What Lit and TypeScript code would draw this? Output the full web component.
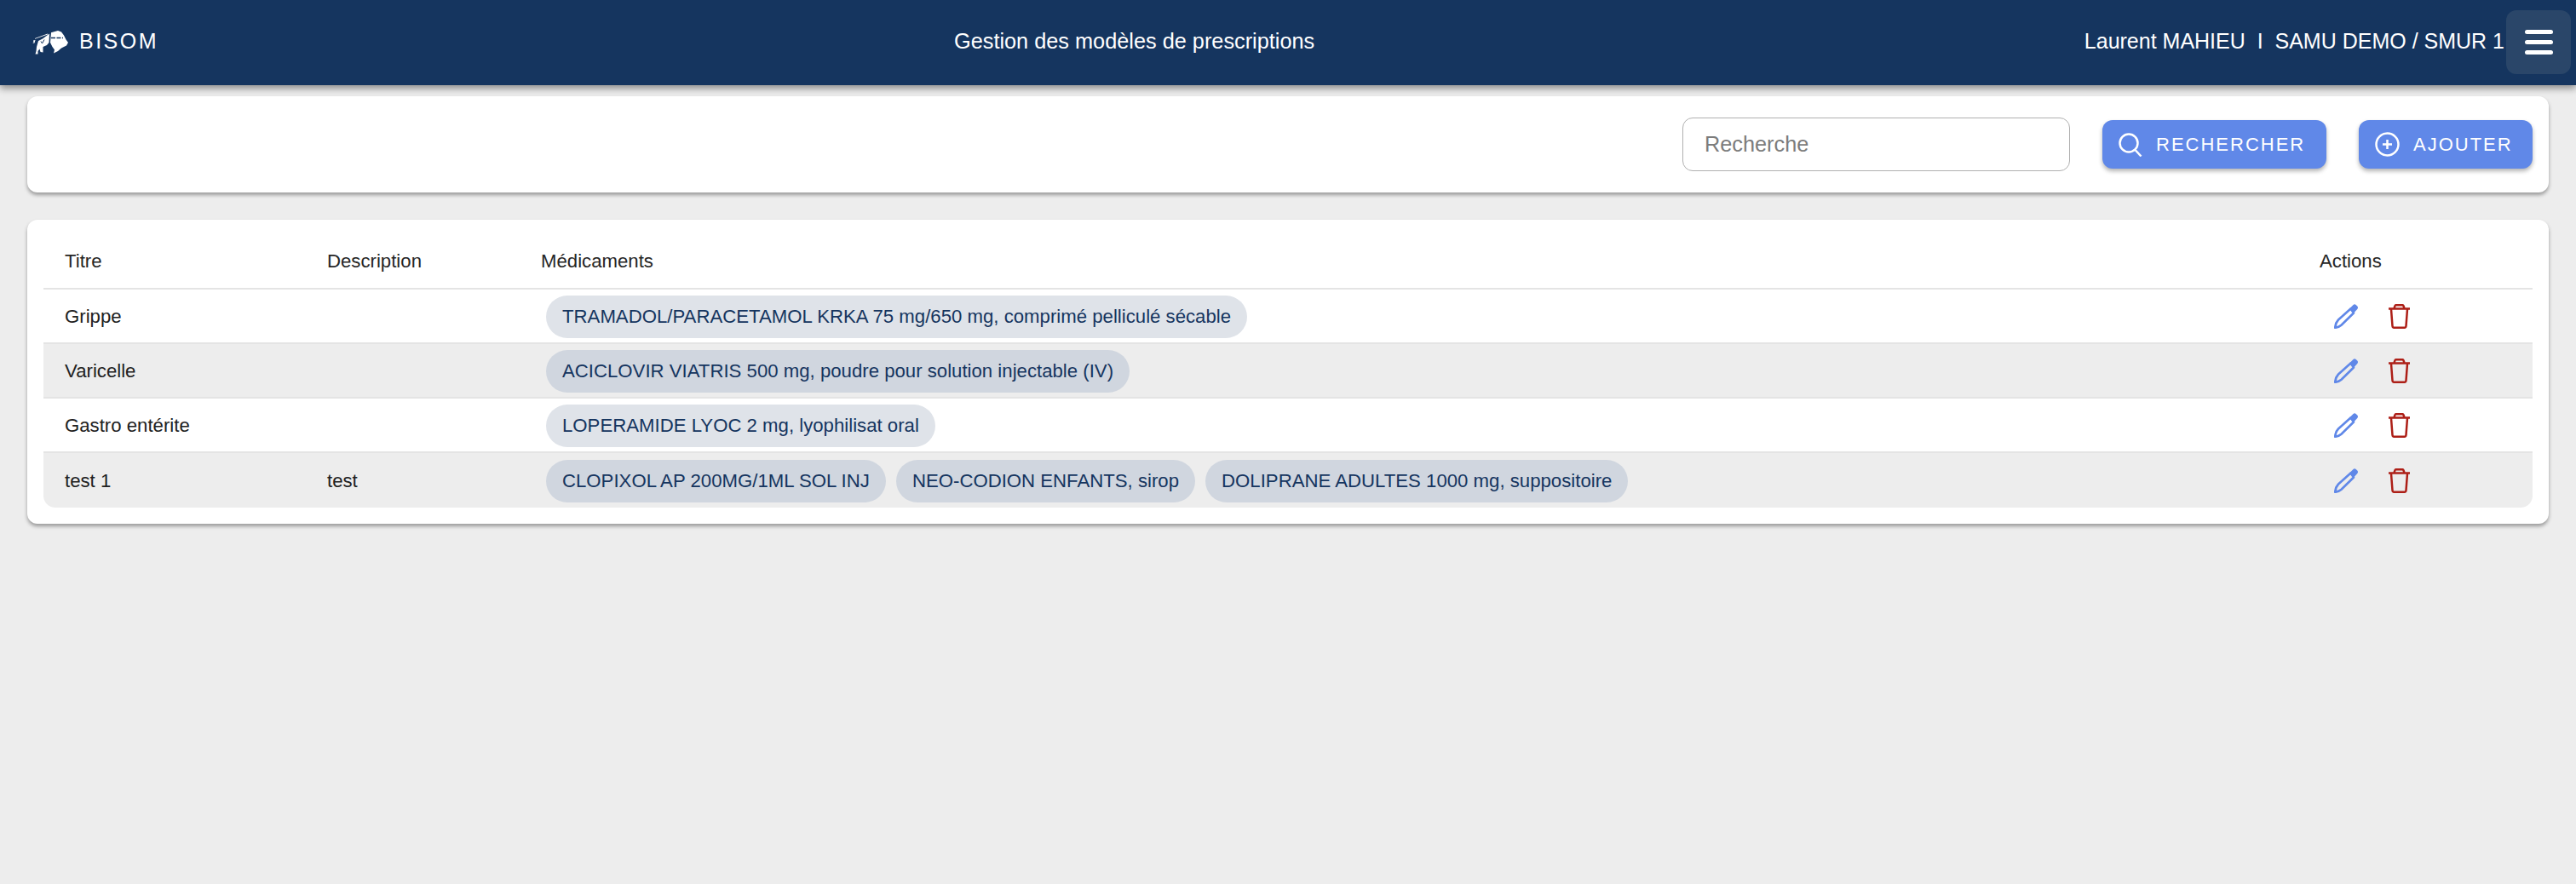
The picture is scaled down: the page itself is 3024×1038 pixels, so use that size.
import { LitElement, html, css } from "lit";
import { customElement } from "lit/decorators.js";

const rows = [
  { t: "Grippe", d: "", m: ["TRAMADOL/PARACETAMOL KRKA 75 mg/650 mg, comprimé pelliculé sécable"] },
  { t: "Varicelle", d: "", m: ["ACICLOVIR VIATRIS 500 mg, poudre pour solution injectable (IV)"] },
  { t: "Gastro entérite", d: "", m: ["LOPERAMIDE LYOC 2 mg, lyophilisat oral"] },
  { t: "test 1", d: "test", m: ["CLOPIXOL AP 200MG/1ML SOL INJ", "NEO-CODION ENFANTS, sirop", "DOLIPRANE ADULTES 1000 mg, suppositoire"] },
];

const pencil = html`<svg class="ico" width="28" height="29" viewBox="0 0 28 29" fill="none"><path d="M1.200 27.800C1.500 24 2.800 20.800 5 18.500L19.500 5.500L23 10.500L8.500 24.800C6.500 26.600 4 27.500 1.200 27.800Z" stroke="#6088e8" stroke-width="2.600" stroke-linejoin="round"/><path d="M18 5.500L22.500 1c1-.9 2.200-.9 3.200 0l1.600 1.600c.9 1 .9 2.300 0 3.300L22.700 11z" fill="#6088e8"/></svg>`;
const trash = html`<svg class="ico" width="25" height="29" viewBox="0 0 25 29" fill="none" stroke="#ad1f17" stroke-width="2.500"><path d="M0 5.500h25"/><path d="M6.500 5l1-2.800C7.800 1.400 8.400 1.200 9 1.200h7c.6 0 1.200.2 1.500 1l1 2.800"/><path d="M3 6l1.500 19.800c.1 1.300 1 2 2 2h12c1 0 1.900-.7 2-2L22 6"/></svg>`;

@customElement("app-root")
export class AppRoot extends LitElement {
  static styles = css`
    :host { display: block; min-height: 1038px; background: #ededed; font-family: "Liberation Sans", Arial, sans-serif; color: #212121; }
    .bar { height: 100px; box-sizing: border-box; padding-bottom: 3px; background: #15355f; color: #fff; display: grid; grid-template-columns: 1120px auto 1fr; align-items: center; box-shadow: 0 4px 8px rgba(0,0,0,.4); position: relative; }
    .brand { display: flex; align-items: center; padding-left: 38px; gap: 12px; font-size: 25px; letter-spacing: 2.500px; }
    .logo { display: block; margin-top: 2px; }
    .title { font-size: 25.300px; }
    .right { display: flex; align-items: center; justify-content: flex-end; font-size: 25px; padding-right: 6px; }
    .user { white-space: pre; margin-right: 2px; }
    .menu { width: 76px; height: 75px; border-radius: 12px; background: #2a4669; display: flex; flex-direction: column; justify-content: center; align-items: center; gap: 7px; margin-top: 2px; }
    .menu i { display: block; width: 33px; height: 5px; border-radius: 3px; background: #fff; }
    .card { background: #fff; border-radius: 12px; box-shadow: 0 3px 4px rgba(0,0,0,.35); margin: 0 32px; }
    .search { margin-top: 13px; height: 113px; display: flex; align-items: center; justify-content: flex-end; padding-right: 19px; gap: 38px; }
    .input { width: 455px; height: 63px; box-sizing: border-box; border: 1px solid #b0b0b0; border-radius: 12px; padding: 0 0 1px 25px; display: flex; align-items: center; font-size: 25.300px; color: #7c7c7c; }
    .btn { height: 57px; box-sizing: border-box; background: #6088e8; color: #fff; border-radius: 12px; display: flex; align-items: center; gap: 16px; padding-left: 19px; font-size: 22px; letter-spacing: 2px; box-shadow: 0 3px 5px rgba(0,0,0,.3); }
    .btn svg { display: block; flex: none; }
    .btn.find { width: 263px; }
    .btn.add { width: 204px; }
    .tablecard { margin-top: 32px; padding: 0 19px 19px; }
    .row { display: grid; grid-template-columns: 308px 251px 1fr 275px; align-items: center; height: 64px; padding-top: 1px; font-size: 22.200px; border-bottom: 2px solid #e4e4e4; box-sizing: border-box; }
    .row > div { padding-left: 25px; min-width: 0; }
    .row.head { height: 82px; padding-top: 18px; color: #262626; }
    .row:nth-child(odd):not(.head) { background: #ededed; }
    .row:last-child { border-bottom: 0; border-radius: 0 0 14px 14px; }
    .row > .chips { display: flex; gap: 12px; padding-left: 31px; }
    .chip { height: 50px; border-radius: 25px; background: #dfe3e9; color: #15355f; padding: 0 19px; display: flex; align-items: center; white-space: nowrap; }
    .row:nth-child(odd) .chip { background: #d0d6df; }
    .row > .actions { display: flex; align-items: center; gap: 36px; padding-left: 42px; }
    .ico { display: block; flex: none; }
  `;

  render() {
    return html`
      <div class="bar">
        <div class="brand">
          <svg class="logo" width="43" height="28" viewBox="0 0 43 28" fill="#fff">
            <path d="M22 2.300L30 0L34 1.500L37 5.600L39.500 10.500L42 14L40 17.500L34 20.500L30 24L25 26.500L26 22.500L23.500 19L21 14Z"/>
            <path d="M3.500 27.500L4.500 24L5 19L7 12L12 9.500L20 3.500L19.500 14L17 17L12.500 19L12.500 25.500L9.500 25L8.500 21.500L6.500 24L6.500 27.500Z"/>
            <path d="M3 9L18 3.500L18 4.500L3 9.800ZM1 11.500L3.500 11L2.500 14.500L0 15L1.500 14Z"/>
            <path d="M22 8.500H36" stroke="#15355f" stroke-width="1.300" stroke-dasharray="5 1.500" fill="none"/>
            <path d="M14 10.500L11.500 15L10 12.500" stroke="#15355f" stroke-width="1" fill="none"/>
          </svg>
          <span>BISOM</span>
        </div>
        <div class="title">Gestion des modèles de prescriptions</div>
        <div class="right">
          <span class="user">Laurent MAHIEU  I  SAMU DEMO / SMUR 1</span>
          <div class="menu"><i></i><i></i><i></i></div>
        </div>
      </div>

      <div class="card search">
        <div class="input">Recherche</div>
        <div class="btn find">
          <svg width="28" height="28" viewBox="0 0 28 28" fill="none" stroke="#fff" stroke-width="2.500"><circle cx="12" cy="12" r="10.500"/><path d="M19.500 20l7 7.500"/></svg>
          <span>RECHERCHER</span>
        </div>
        <div class="btn add">
          <svg width="29" height="29" viewBox="0 0 29 29" fill="none" stroke="#fff" stroke-width="2.500"><circle cx="14.500" cy="14.500" r="13"/><path d="M14.500 9v11M9 14.500h11"/></svg>
          <span>AJOUTER</span>
        </div>
      </div>

      <div class="card tablecard">
        <div class="row head"><div>Titre</div><div>Description</div><div>Médicaments</div><div>Actions</div></div>
        ${rows.map((r) => html`
          <div class="row">
            <div>${r.t}</div>
            <div>${r.d}</div>
            <div class="chips">${r.m.map((m) => html`<span class="chip">${m}</span>`)}</div>
            <div class="actions">${pencil}${trash}</div>
          </div>`)}
      </div>
    `;
  }
}
